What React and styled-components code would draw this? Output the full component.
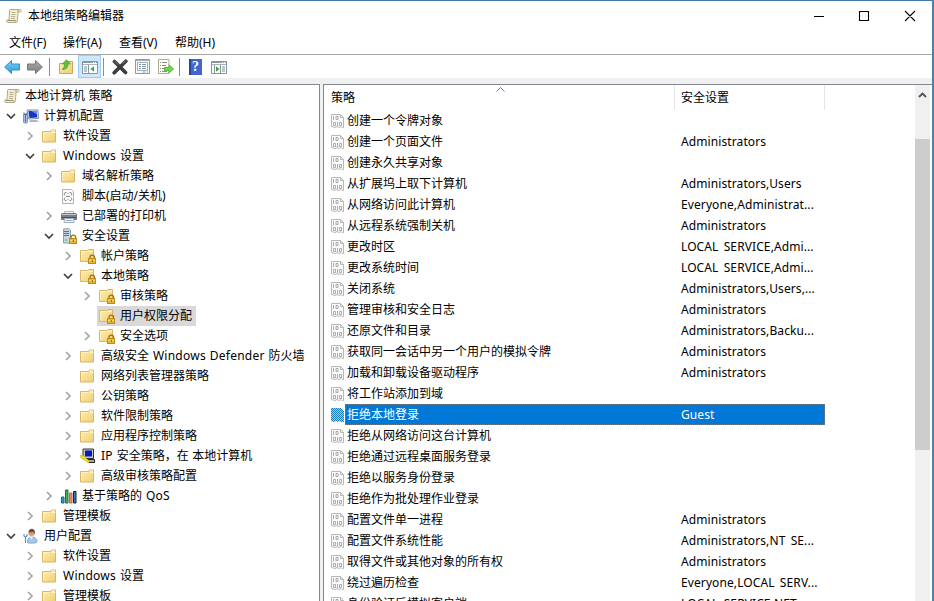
import { useState } from "react"
import styled, { createGlobalStyle, css } from "styled-components"

const tree = [
  { level: 0, icon: 'scroll', label: '本地计算机 策略' },
  { level: 1, icon: 'computer', label: '计算机配置', state: 'open' },
  { level: 2, icon: 'folder', label: '软件设置', state: 'closed' },
  { level: 2, icon: 'folder', label: 'Windows 设置', state: 'open' },
  { level: 3, icon: 'folder', label: '域名解析策略', state: 'closed' },
  { level: 3, icon: 'script', label: '脚本(启动/关机)' },
  { level: 3, icon: 'printer', label: '已部署的打印机', state: 'closed' },
  { level: 3, icon: 'security', label: '安全设置', state: 'open' },
  { level: 4, icon: 'locked', label: '帐户策略', state: 'closed' },
  { level: 4, icon: 'locked', label: '本地策略', state: 'open' },
  { level: 5, icon: 'locked', label: '审核策略', state: 'closed' },
  { level: 5, icon: 'locked', label: '用户权限分配' },
  { level: 5, icon: 'locked', label: '安全选项', state: 'closed' },
  { level: 4, icon: 'folder', label: '高级安全 Windows Defender 防火墙', state: 'closed' },
  { level: 4, icon: 'folder', label: '网络列表管理器策略' },
  { level: 4, icon: 'folder', label: '公钥策略', state: 'closed' },
  { level: 4, icon: 'folder', label: '软件限制策略', state: 'closed' },
  { level: 4, icon: 'folder', label: '应用程序控制策略', state: 'closed' },
  { level: 4, icon: 'ipsec', label: 'IP 安全策略，在 本地计算机', state: 'closed' },
  { level: 4, icon: 'folder', label: '高级审核策略配置', state: 'closed' },
  { level: 3, icon: 'bars', label: '基于策略的 QoS', state: 'closed' },
  { level: 2, icon: 'folder', label: '管理模板', state: 'closed' },
  { level: 1, icon: 'user', label: '用户配置', state: 'open' },
  { level: 2, icon: 'folder', label: '软件设置', state: 'closed' },
  { level: 2, icon: 'folder', label: 'Windows 设置', state: 'closed' },
  { level: 2, icon: 'folder', label: '管理模板', state: 'closed' },
]

const policies = [
  ['创建一个令牌对象', ''],
  ['创建一个页面文件', 'Administrators'],
  ['创建永久共享对象', ''],
  ['从扩展坞上取下计算机', 'Administrators,Users'],
  ['从网络访问此计算机', 'Everyone,Administrat...'],
  ['从远程系统强制关机', 'Administrators'],
  ['更改时区', 'LOCAL SERVICE,Admi...'],
  ['更改系统时间', 'LOCAL SERVICE,Admi...'],
  ['关闭系统', 'Administrators,Users,...'],
  ['管理审核和安全日志', 'Administrators'],
  ['还原文件和目录', 'Administrators,Backu...'],
  ['获取同一会话中另一个用户的模拟令牌', 'Administrators'],
  ['加载和卸载设备驱动程序', 'Administrators'],
  ['将工作站添加到域', ''],
  ['拒绝本地登录', 'Guest'],
  ['拒绝从网络访问这台计算机', ''],
  ['拒绝通过远程桌面服务登录', ''],
  ['拒绝以服务身份登录', ''],
  ['拒绝作为批处理作业登录', ''],
  ['配置文件单一进程', 'Administrators'],
  ['配置文件系统性能', 'Administrators,NT SE...'],
  ['取得文件或其他对象的所有权', 'Administrators'],
  ['绕过遍历检查', 'Everyone,LOCAL SERV...'],
  ['身份验证后模拟客户端', 'LOCAL SERVICE,NET...'],
]

function Folder() {
  return (
    <>
      <path d="M.5 3.500h8l1-1.500h4v12H.5z" fill="url(#folder)" stroke="#d9b565" />
      <path d="M9.500 4.500h4M1.500 12.500v-8h6.500" stroke="#fff3bd" fill="none" />
      <path d="M10 3h3" stroke="#fffbe8" />
    </>
  )
}

function Lock() {
  return (
    <>
      <path d="M10 11V9.500a2.300 2.300 0 0 1 4.600 0V11" fill="none" stroke="#98751f" strokeWidth="1.300" />
      <rect x="8.500" y="10.500" width="7" height="5" fill="#e9b62c" stroke="#c08d1c" />
      <path d="M9 12.500h6" stroke="#f7d86d" />
      <path d="M12.300 12v2" stroke="#8a6415" />
    </>
  )
}

function Icon({ name }) {
  return (
    <Glyph viewBox="0 0 16 16">
      {name === 'folder' && <Folder />}
      {name === 'locked' && (
        <>
          <path d="M.5 2.500h7l1-1h5v12H.5z" fill="url(#folder)" stroke="#d9b565" />
          <path d="M9 3.500h4M1.500 12V3.500H7" stroke="#fff3bd" fill="none" />
          <Lock />
        </>
      )}
      {name === 'scroll' && (
        <>
          <path d="M4 1.500h10.500c1 0 1 2.500 0 2.500H12l-.5 8.500c0 1.500-1 2-2 2h-8c-1.300 0-1.300-2.500 0-2.500H3L3.500 3c0-1 .2-1.500.5-1.500z" fill="#f4edcf" stroke="#b3aa8b" />
          <path d="M1.500 12.500h8c.5 0 .5 2 0 2M12 4V2" stroke="#9a9275" fill="none" />
          <path d="M5.500 4.500h4M5.500 6.500h4M5.200 8.500h4M5 10.500h4" stroke="#b9b193" />
        </>
      )}
      {name === 'computer' && (
        <>
          <path d="M4 2h11l.5 8.500-10 .5z" fill="#d9e1ed" stroke="#8794ad" />
          <path d="M5.500 3H14v6.500l-7.500.5z" fill="#1a32c4" />
          <path d="M8.500 3H14v3.500z" fill="#5d90ef" />
          <path d="M7 12h7l1.500 2H6z" fill="#a9b6c8" />
          <rect x=".5" y="6" width="4" height="9" rx="1" fill="#a9c0de" stroke="#7c97bd" />
          <path d="M2.500 7v7M1 4.500v2h3v-2" stroke="#4d6ea3" fill="none" />
        </>
      )}
      {name === 'script' && (
        <>
          <path d="M1.500 1.500h9l2 2v12h-11z" fill="#fbfbfb" stroke="#b0b3b6" />
          <path d="M5.500 4.500H4L3 6l1 1.500M8.500 4.500H10L11 6l-1 1.500M4 9.500L3 11l1 1.500h1.500M10 9.500l1 1.500-1 1.500H8.500M5 8.500h4M6.500 5.500h1M6.500 11.500h1" fill="none" stroke="#7c8083" strokeWidth=".9" />
        </>
      )}
      {name === 'printer' && (
        <>
          <path d="M3.500 3.500h9v3h-9z" fill="#f5f7f9" stroke="#b4b9bd" />
          <path d="M1 5.500h14l.5 1.500v4.500H.5V7z" fill="#7c8083" stroke="#74787b" />
          <path d="M1 6.500h14" stroke="#c4c8ca" />
          <path d="M1 9.500h14" stroke="#4d5053" />
          <path d="M3.500 10.500h9l.5 4H3z" fill="#f7fafc" stroke="#a1abb4" />
          <path d="M4.500 12.500h7" stroke="#82ade0" />
        </>
      )}
      {name === 'security' && (
        <>
          <path d="M2.500 1l5-.5L9.500 2v13h-7z" fill="#c9d5de" stroke="#8c9eac" />
          <path d="M3 3.500h5M3 5.500h5M3 7.500h5" stroke="#5f7585" />
          <path d="M4 12h2" stroke="#50b252" />
          <Lock />
        </>
      )}
      {name === 'ipsec' && (
        <>
          <path d="M3 1h10.500v9.500H3z" fill="#c9c9c9" stroke="#333" />
          <path d="M5 2.500h7v6H5z" fill="#1018b4" />
          <path d="M6 11.500h8.500v3H9z" fill="#aaa" stroke="#222" />
          <path d="M.5 7.500L3 7l1.500 2 5 4-1 2-3-2.500L1 10z" fill="#f2e51e" stroke="#aba31a" strokeWidth=".6" />
        </>
      )}
      {name === 'bars' && (
        <>
          <path d="M.5 9h2.500v6H.5z" fill="#2e98c9" stroke="#17688e" />
          <path d="M4.500 2h2.500v13H4.500z" fill="#47aa59" stroke="#287038" />
          <path d="M8.500 5h2.500v10H8.500z" fill="#e98363" stroke="#c76a50" />
          <path d="M12.500 3.500h2.500V15h-2.500z" fill="#357dbb" stroke="#18242d" />
        </>
      )}
      {name === 'user' && (
        <>
          <path d="M4.500 14.500c0-4 1.500-5.500 4.500-5.500s5 2 5 5l-2 1H5z" fill="#a9c7e9" stroke="#86a8d0" />
          <path d="M7 9l1.500 2L10 9z" fill="#fff" />
          <circle cx="8.500" cy="5" r="3" fill="#d49c6d" />
          <path d="M5.500 4.500c0-5 6.500-5 6.500 0L11 7V4z" fill="#714f36" />
          <path d="M1 6v2l1.500 1V15M4 6v2L2.500 9v6" stroke="#6389b5" strokeWidth="1.100" fill="none" />
        </>
      )}
      {name === 'policy' && (
        <>
          <path d="M.5 1.500h9l3 3v10H11l-1-1-2 1-2-1-2 1-3.500-1z" fill="#fafafa" stroke="#b8b8b8" />
          <path d="M9.500 1.500v3h3" fill="none" stroke="#b8b8b8" />
          <path d="M2.500 3v4M5 3.500h2v3H5zM2.500 9.500h2v3h-2zM6.500 9v4M8.500 9.500h2v3h-2z" fill="none" stroke="#a3a3a3" strokeWidth=".9" />
        </>
      )}
      {name === 'policySelected' && (
        <path d="M0 1h10l3 3v11h-3l-1-1-2 1-2-1-2 1-3-1z" fill="url(#dither)" />
      )}
      {name === 'back' && (
        <path d="M.6 8L7.500 1.500v3.500h8v6h-8v3.500z" fill="url(#blue)" stroke="#3a8dc0" strokeLinejoin="round" />
      )}
      {name === 'forward' && (
        <path d="M15.400 8L8.500 1.500v3.500h-8v6h8v3.500z" fill="url(#gray)" stroke="#777" strokeLinejoin="round" />
      )}
      {name === 'up' && (
        <>
          <path d="M.5 4.500h7l1-2h5v12H.5z" fill="url(#folder)" stroke="#cfa654" />
          <path d="M3 10.500C5 9 5.500 7.500 5.500 5H3.200L7.500.7 11.500 5H9c0 4-2 5.500-6 5.500z" fill="#63bd37" stroke="#4ba032" strokeWidth=".7" />
        </>
      )}
      {name === 'delete' && (
        <>
          <path d="M2.500 2.500L13.500 13.500M13.800 2.300L2.200 13.700" stroke="#3d3d3d" strokeWidth="3.700" strokeLinecap="round" />
          <path d="M2.300 1.800l4 4M13.500 1.800l-3 3" stroke="#8a8a8a" strokeWidth=".8" />
        </>
      )}
      {name === 'properties' && (
        <>
          <path d="M.5.500h14v14H.5z" fill="#f4f6f8" stroke="#929aa1" />
          <path d="M1 1.500h13" stroke="#a6afb6" />
          <path d="M2.500 3.500h10v8h-10z" fill="#fff" stroke="#a5adb4" />
          <path d="M4 5.500h2M7 5.500h4M4 7.500h2M7 7.500h4M4 9.500h2M7 9.500h4M8 13h2M12 13h1" stroke="#7894a9" />
        </>
      )}
      {name === 'export' && (
        <>
          <path d="M.5.500h10.500v14H.5z" fill="#fffdf2" stroke="#b0aa91" />
          <path d="M2 3.500h1M4 3.500h5M2 6.500h1M4 6.500h4M2 9.500h1M4 9.500h3M2 12.500h1M4 12.500h5" stroke="#89908a" />
          <path d="M6.500 8.500H11V5.800L15.700 10 11 14v-2.500H6.500z" fill="#75d34f" stroke="#4cab3a" strokeWidth=".8" />
        </>
      )}
    </Glyph>
  )
}

// the two console layout buttons share one frame, only the panes differ
function PaneIcon({ side }) {
  return (
    <Glyph viewBox="0 0 16 16">
      <path d="M.5 2.500h15v12H.5z" fill="#fff" stroke="#8b949b" />
      <path d="M1 3.500h14" stroke="#8c969e" />
      <path d="M1 5.500h14" stroke="#a9b4bc" />
      <path d="M11 3.500h1M13 3.500h1" stroke="#fff" />
      {side === 'left' ? (
        <>
          <path d="M6.500 6v8" stroke="#8b949b" />
          <path d="M2 8h3M2 10h3M2 12h3" stroke="#718da5" />
          <path d="M12 7.200v5.600L8.500 10z" fill="#38a63b" />
        </>
      ) : (
        <>
          <path d="M9.500 6v8M3.500 6v8" stroke="#8b949b" />
          <path d="M11 8h3M11 10h3M11 12h3" stroke="#718da5" />
          <path d="M5 7.200v5.600L8.500 10z" fill="#38a63b" />
        </>
      )}
    </Glyph>
  )
}

function Paints() {
  return (
    <HiddenSvg>
      <defs>
        <linearGradient id="folder" x2="1" y2="1">
          <stop stopColor="#fff0b0" />
          <stop offset="1" stopColor="#f0ce74" />
        </linearGradient>
        <linearGradient id="blue" x2="0" y2="1">
          <stop stopColor="#7fd3f7" />
          <stop offset="1" stopColor="#229cdc" />
        </linearGradient>
        <linearGradient id="gray" x2="0" y2="1">
          <stop stopColor="#aaaaaa" />
          <stop offset="1" stopColor="#808080" />
        </linearGradient>
        <pattern id="dither" width="2" height="2" patternUnits="userSpaceOnUse">
          <path d="M0 0h2v2H0z" fill="#a5cce6" />
          <path d="M0 0h1v1H0zM1 1h1v1H1z" fill="#1a7fc4" />
        </pattern>
      </defs>
    </HiddenSvg>
  )
}

function Label({ text }) {
  const parts = text.split(/(\s?[A-Za-z]{2,}\s?)/)
  return (
    <LabelText>
      {parts.map((part, i) => i % 2 ? <Latin key={i}>{part}</Latin> : part)}
    </LabelText>
  )
}

export default function App() {

  const [node, setNode] = useState(11);
  const [policy, setPolicy] = useState(14);

  return (
    <Window>
      <GlobalStyle />
      <Paints />
      <TitleBar>
        <Icon name='scroll' />
        <Title>本地组策略编辑器</Title>
        <Controls viewBox="0 0 112 14">
          <path d="M4 7.500h10M49.500 2.500h9v9h-9zM95 2l10 10M105 2L95 12" />
        </Controls>
      </TitleBar>
      <MenuBar>
        <MenuItem>文件(F)</MenuItem>
        <MenuItem>操作(A)</MenuItem>
        <MenuItem>查看(V)</MenuItem>
        <MenuItem>帮助(H)</MenuItem>
      </MenuBar>
      <ToolBar>
        <Tool><Icon name='back' /></Tool>
        <Tool><Icon name='forward' /></Tool>
        <Separator />
        <Tool><Icon name='up' /></Tool>
        <Tool $active><PaneIcon side='left' /></Tool>
        <Separator $tight />
        <Tool><Icon name='delete' /></Tool>
        <Tool><Icon name='properties' /></Tool>
        <Tool><Icon name='export' /></Tool>
        <Separator $tight />
        <Tool><Help>?</Help></Tool>
        <Tool><PaneIcon side='right' /></Tool>
      </ToolBar>
      <Body>
        <TreePane>
          {tree.map((item, i) => (
            <TreeRow key={i} $level={item.level}>
              {item.level > 0 && (
                <Chevron viewBox="0 0 10 10" $open={item.state === 'open'}>
                  {item.state === 'open' && <path d="M1 3l4 4 4-4" />}
                  {item.state === 'closed' && <path d="M3 1l4 4-4 4" />}
                </Chevron>
              )}
              <Node $selected={i === node} onClick={() => setNode(i)}>
                <Icon name={item.icon} />
                <Label text={item.label} />
              </Node>
            </TreeRow>
          ))}
        </TreePane>
        <ListPane>
          <Table>
            <Header>
              <HeadCell>
                策略
                <SortMark viewBox="0 0 9 5"><path d="M.5 4.500l4-4 4 4" /></SortMark>
              </HeadCell>
              <HeadCell>安全设置</HeadCell>
            </Header>
            {policies.map(([name, value], i) => (
              <PolicyRow key={name} onClick={() => setPolicy(i)}>
                <IconCell><Icon name={i === policy ? 'policySelected' : 'policy'} /></IconCell>
                <Entry $selected={i === policy}>
                  <Name>{name}</Name>
                  <Value>{value}</Value>
                </Entry>
              </PolicyRow>
            ))}
          </Table>
          <ScrollBar>
            <ScrollUp viewBox="0 0 15 20"><path d="M4 12l3.500-3.500L11 12" /></ScrollUp>
            <Thumb />
          </ScrollBar>
        </ListPane>
      </Body>
    </Window>
  )
}

const GlobalStyle = createGlobalStyle`
  body {
    margin: 0;
    overflow: hidden;
  }
`
const Window = styled.div`
  box-sizing: border-box;
  width: 934px;
  height: 601px;
  display: flex;
  flex-direction: column;
  overflow: hidden;
  border-top: 1px solid #3e7ba6;
  border-right: 2px solid #4a83aa;
  background: #fff;
  color: #000;
  font: 12px/20px "Noto Sans", "Noto Sans CJK SC", sans-serif;
  white-space: nowrap;
  cursor: default;
`
const HiddenSvg = styled.svg`
  position: absolute;
  width: 0;
  height: 0;
`
const Glyph = styled.svg`
  flex: none;
  width: 16px;
  height: 16px;
`
const TitleBar = styled.div`
  flex: none;
  height: 30px;
  display: flex;
  align-items: center;
  padding-left: 6px;
`
const Title = styled.span`
  flex: 1;
  padding-left: 6px;
`
const Controls = styled.svg`
  width: 112px;
  height: 14px;
  margin-right: 10px;
  fill: none;
  stroke: #000;
  stroke-width: 1.1;
`
const MenuBar = styled.div`
  flex: none;
  height: 23px;
  display: flex;
  align-items: center;
  gap: 17px;
  padding-left: 9px;
  border-bottom: 1px solid #a9a9a9;
`
const MenuItem = styled.span`
  width: 39px;
  &:first-child {
    width: 37px;
  }
`
const ToolBar = styled.div`
  flex: none;
  height: 23px;
  display: flex;
  align-items: center;
  border-bottom: 6px solid #f0f0f0;
`
const Tool = styled.div`
  box-sizing: border-box;
  width: 23px;
  height: 23px;
  display: flex;
  align-items: center;
  justify-content: center;
  ${({ $active }) => $active && css`
    border: 1px solid #9dcdf3;
    background: #cce8ff;
  `}
`
const Separator = styled.div`
  width: 1px;
  height: 18px;
  margin: ${({ $tight }) => $tight ? '0 4px 0 2px' : '0 5px 0 3px'};
  background: #8d8d8d;
`
const Help = styled.div`
  width: 13px;
  height: 16px;
  background: linear-gradient(90deg, #28459b 2px, #4264cd 2px);
  color: #fff;
  font: bold 14px/16px "Liberation Serif", serif;
  text-align: center;
`
const Body = styled.div`
  flex: 1;
  min-height: 0;
  display: flex;
  gap: 3px;
  background: #f0f0f0;
`
const TreePane = styled.div`
  box-sizing: border-box;
  width: 320px;
  padding-top: 1px;
  overflow: hidden;
  border-top: 1px solid #828790;
  border-right: 1px solid #828790;
  background: #fff;
`
const TreeRow = styled.div`
  height: 20px;
  display: flex;
  align-items: center;
  padding-left: ${({ $level }) => $level ? $level * 19 - 13 : 2}px;
`
const Chevron = styled.svg`
  width: 10px;
  height: 10px;
  margin-right: 5px;
  fill: none;
  stroke: ${({ $open }) => $open ? '#404040' : '#a6a6a6'};
  stroke-width: 1.7;
`
const Node = styled.div`
  height: 20px;
  display: flex;
  align-items: center;
  gap: 5px;
  padding: 0 4px 0 2px;
  background: ${({ $selected }) => $selected ? '#d9d9d9' : 'transparent'};
`
const LabelText = styled.span`
  white-space: pre;
  word-spacing: 0.5px;
`
const Latin = styled.span`
  letter-spacing: 0.25px;
`
const ListPane = styled.div`
  flex: 1;
  min-width: 0;
  display: flex;
  overflow: hidden;
  border-top: 1px solid #828790;
  border-left: 1px solid #828790;
  background: #fff;
`
const Table = styled.div`
  flex: 1;
  padding-left: 7px;
`
const Header = styled.div`
  width: 494px;
  height: 25px;
  display: grid;
  grid-template-columns: 344px 150px;
`
const HeadCell = styled.div`
  position: relative;
  padding-left: 6px;
  border-right: 1px solid #e5e5e5;
  line-height: 25px;
  &:first-child {
    padding-left: 0;
  }
`
const SortMark = styled.svg`
  position: absolute;
  top: 2px;
  left: 165px;
  width: 9px;
  height: 5px;
  fill: none;
  stroke: #777;
`
const PolicyRow = styled.div`
  height: 21px;
  display: flex;
  align-items: center;
`
const IconCell = styled.div`
  width: 14px;
  display: flex;
`
const Entry = styled.div`
  box-sizing: border-box;
  width: 480px;
  height: 21px;
  display: grid;
  grid-template-columns: 335px 1fr;
  line-height: 21px;
  ${({ $selected }) => $selected && css`
    background: #0078d7;
    color: #fff;
    outline: 1px dotted #6d7f8c;
    outline-offset: -1px;
  `}
`
const Name = styled.span`
  padding-left: 2px;
`
const Value = styled.span`
  padding-left: 1px;
  letter-spacing: 0.1px;
  word-spacing: 2px;
`
const ScrollBar = styled.div`
  width: 15px;
  margin-right: 2px;
  background: #f0f0f0;
`
const ScrollUp = styled.svg`
  display: block;
  width: 15px;
  height: 20px;
  fill: none;
  stroke: #505050;
  stroke-width: 1.8;
`
const Thumb = styled.div`
  height: 311px;
  margin-top: 34px;
  background: #cdcdcd;
`
